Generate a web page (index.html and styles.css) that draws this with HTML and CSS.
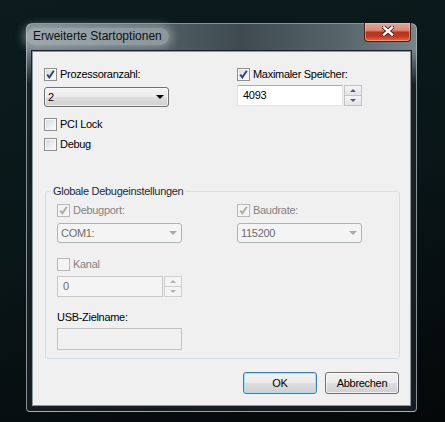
FILE: index.html
```html
<!DOCTYPE html>
<html lang="de">
<head>
    <meta charset="utf-8">
    <title>Erweiterte Startoptionen</title>
    <link rel="stylesheet" href="styles.css">
</head>
<body>
    <div class="window">
        <div class="titlebar">
            <span class="title">Erweiterte Startoptionen</span>
            <button class="close-btn" title="Schließen">
                <svg width="12" height="10" viewBox="0 0 12 10">
                    <path d="M2 1.5 L10 8.5 M10 1.5 L2 8.5" stroke="#3b1d18" stroke-width="4.2" stroke-linecap="square" fill="none"/>
                    <path d="M2 1.5 L10 8.5 M10 1.5 L2 8.5" stroke="#ffffff" stroke-width="2.4" stroke-linecap="square" fill="none"/>
                </svg>
            </button>
        </div>

        <div class="client">
            <div class="top-grid">
                <div class="field">
                    <label class="check">
                        <span class="box">
                            <svg width="11" height="11" viewBox="0 0 11 11"><path d="M2.2 5.6 L4.4 8.4 L8.8 1.8" stroke="#2d4377" stroke-width="1.9" fill="none"/></svg>
                        </span>Prozessoranzahl:
                    </label>
                    <div class="combo">
                        <span>2</span>
                        <span class="arrow"></span>
                    </div>
                </div>
                <div class="field">
                    <label class="check">
                        <span class="box">
                            <svg width="11" height="11" viewBox="0 0 11 11"><path d="M2.2 5.6 L4.4 8.4 L8.8 1.8" stroke="#2d4377" stroke-width="1.9" fill="none"/></svg>
                        </span>Maximaler Speicher:
                    </label>
                    <div class="spin">
                        <span class="spin-text">4093</span>
                        <span class="spin-btns">
                            <span class="spin-btn"><span class="tri-up"></span></span>
                            <span class="spin-btn"><span class="tri-down"></span></span>
                        </span>
                    </div>
                </div>
            </div>

            <label class="check pci-row"><span class="box"></span>PCI Lock</label>
            <label class="check debug-row"><span class="box"></span>Debug</label>

            <div class="group">
                <div class="group-title">Globale Debugeinstellungen</div>

                <div class="group-grid">
                    <div class="field">
                        <label class="check disabled">
                            <span class="box">
                                <svg width="11" height="11" viewBox="0 0 11 11"><path d="M2.2 5.6 L4.4 8.4 L8.8 1.8" stroke="#acacac" stroke-width="1.9" fill="none"/></svg>
                            </span>Debugport:
                        </label>
                        <div class="combo disabled">
                            <span>COM1:</span>
                            <span class="arrow"></span>
                        </div>
                    </div>
                    <div class="field">
                        <label class="check disabled">
                            <span class="box">
                                <svg width="11" height="11" viewBox="0 0 11 11"><path d="M2.2 5.6 L4.4 8.4 L8.8 1.8" stroke="#acacac" stroke-width="1.9" fill="none"/></svg>
                            </span>Baudrate:
                        </label>
                        <div class="combo disabled">
                            <span>115200</span>
                            <span class="arrow"></span>
                        </div>
                    </div>
                </div>

                <label class="check disabled kanal-row"><span class="box"></span>Kanal</label>
                <div class="spin disabled kanal-spin">
                    <span class="spin-text">0</span>
                    <span class="spin-btns">
                        <span class="spin-btn"><span class="tri-up"></span></span>
                        <span class="spin-btn"><span class="tri-down"></span></span>
                    </span>
                </div>

                <div class="usb-label">USB-Zielname:</div>
                <div class="textbox"></div>
            </div>

            <div class="actions">
                <button class="btn default">OK</button>
                <button class="btn">Abbrechen</button>
            </div>
        </div>
    </div>
</body>
</html>
```

FILE: styles.css
```css
body {
    margin: 0;
    width: 445px;
    height: 422px;
    position: relative;
    overflow: hidden;
    font-family: "Liberation Sans", Arial, sans-serif;
    font-size: 11px;
    letter-spacing: -0.3px;
    color: #000;
    background: linear-gradient(165deg, #0c1b1e 0%, #0a1719 45%, #040808 100%);
}

.window {
    position: absolute;
    left: 26px;
    top: 23px;
    width: 391px;
    height: 389px;
    box-sizing: border-box;
    display: flex;
    flex-direction: column;
    padding: 0 5px 5px 5px;
    border: 1px solid rgba(185, 195, 200, 0.7);
    border-radius: 6px 6px 4px 4px;
    background:
        linear-gradient(to bottom, rgba(24, 32, 36, 0) 0, rgba(24, 32, 36, 0) 26px, #192125 60px, #151b1f 100%),
        linear-gradient(90deg, #75828a 0%, #55636a 30%, #3e4a50 55%, #56646a 80%, #78868c 100%);
}

.titlebar {
    height: 27px;
    display: flex;
    justify-content: space-between;
    align-items: flex-start;
}

.title {
    margin: 4px 0 0 -6px;
    padding: 1px 7px;
    font-size: 12px;
    letter-spacing: 0;
    line-height: 15px;
    border-radius: 10px;
    background: rgba(190, 198, 202, 0.55);
    box-shadow: 0 0 8px 3px rgba(190, 198, 202, 0.5);
    color: #111;
}

.close-btn {
    margin-top: -1px;
    width: 47px;
    height: 19px;
    padding: 0;
    display: flex;
    align-items: flex-start;
    justify-content: center;
    padding-top: 3px;
    border: 1px solid #4b2018;
    border-top: none;
    border-radius: 0 0 4px 4px;
    background: linear-gradient(#e4a898 0%, #d98a78 40%, #b8331a 52%, #c23a20 75%, #df6f4e 100%);
    box-shadow: inset 0 0 0 1px rgba(255, 200, 185, 0.45);
}

.client {
    flex: 1;
    box-sizing: border-box;
    padding: 14px 11px 11px 11px;
    background: #f0f0f0;
    border: 1px solid #8d969b;
    box-shadow: 0 0 0 1px #1b2226;
}

.top-grid {
    display: grid;
    grid-template-columns: 193px 1fr;
}

.group-grid {
    display: grid;
    grid-template-columns: 180px 1fr;
    margin-top: 3px;
}

.check {
    display: flex;
    align-items: center;
    height: 17px;
    line-height: 17px;
}

.check.disabled {
    color: #838383;
}

.box {
    width: 13px;
    height: 13px;
    box-sizing: border-box;
    margin-right: 3px;
    display: flex;
    align-items: center;
    justify-content: center;
    border: 1px solid #8e8f8f;
    background: linear-gradient(135deg, #d3d6db 0%, #eef0f2 60%, #fbfbfb 100%);
    box-shadow: inset 0 0 0 1px #f6f6f6;
}

.check.disabled .box {
    border-color: #b8b8b8;
    background: #f4f4f4;
    box-shadow: none;
}

.pci-row {
    margin-top: 9px;
}

.debug-row {
    margin-top: 3px;
}

.combo {
    margin-top: 4px;
    width: 125px;
    height: 20px;
    box-sizing: border-box;
    display: flex;
    align-items: center;
    justify-content: space-between;
    padding: 0 4px 0 3px;
    border: 1px solid #707070;
    border-radius: 3px;
    background: linear-gradient(#f3f3f3 0%, #ebebeb 48%, #dedede 52%, #d0d0d0 100%);
    box-shadow: inset 0 0 0 1px rgba(255, 255, 255, 0.6);
}

.combo .arrow {
    width: 0;
    height: 0;
    border-left: 4px solid transparent;
    border-right: 4px solid transparent;
    border-top: 4px solid #000;
}

.combo.disabled {
    color: #6d6d6d;
    border-color: #adb2b5;
    background: #f4f4f4;
    box-shadow: none;
}

.combo.disabled .arrow {
    border-top-color: #a9a9a9;
}

.spin {
    margin-top: 2px;
    width: 125px;
    height: 21px;
    display: flex;
}

.spin-text {
    flex: 1;
    box-sizing: border-box;
    padding: 0 5px;
    line-height: 19px;
    border: 1px solid #e2e3ea;
    border-top-color: #abadb3;
    background: #fff;
}

.spin-btns {
    width: 18px;
    display: flex;
    flex-direction: column;
    margin-left: 1px;
}

.spin-btn {
    flex: 1;
    display: flex;
    align-items: center;
    justify-content: center;
    border: 1px solid #c3c3c3;
    background: linear-gradient(#f5f5f5, #e4e4e4);
}

.spin-btn + .spin-btn {
    border-top: none;
}

.tri-up {
    width: 0;
    height: 0;
    border-left: 3px solid transparent;
    border-right: 3px solid transparent;
    border-bottom: 3px solid #4c5e88;
}

.tri-down {
    width: 0;
    height: 0;
    border-left: 3px solid transparent;
    border-right: 3px solid transparent;
    border-top: 3px solid #4c5e88;
}

.spin.disabled .spin-text {
    color: #6d6d6d;
    background: #f4f4f4;
    border-color: #c8c8c8;
}

.spin.disabled .spin-btn {
    background: #f4f4f4;
    border-color: #cfcfcf;
}

.spin.disabled .tri-up {
    border-bottom-color: #b0b0b0;
}

.spin.disabled .tri-down {
    border-top-color: #b0b0b0;
}

.group {
    margin: 38px 0 0 1px;
    width: 355px;
    box-sizing: border-box;
    padding: 0 11px 8px 11px;
    border: 1px solid #d5dfe5;
    border-radius: 3px;
}

.group-title {
    display: table;
    margin: -8px 0 0 -6px;
    padding: 0 2px;
    line-height: 15px;
    background: #f0f0f0;
    color: #1a2a3c;
}

.kanal-row {
    margin-top: 13px;
}

.kanal-spin {
    margin-top: 3px;
}

.usb-label {
    margin-top: 12px;
    line-height: 17px;
}

.textbox {
    margin-top: 2px;
    width: 125px;
    height: 22px;
    box-sizing: border-box;
    border: 1px solid #c2c2c2;
    background: #f0f0f0;
}

.actions {
    display: flex;
    justify-content: flex-end;
    gap: 8px;
    margin-top: 13px;
}

.btn {
    width: 74px;
    height: 22px;
    padding: 0;
    font: inherit;
    letter-spacing: inherit;
    color: #000;
    border: 1px solid #707070;
    border-radius: 3px;
    background: linear-gradient(#f2f2f2 0%, #ebebeb 48%, #dddddd 52%, #cfcfcf 100%);
    box-shadow: inset 0 0 0 1px rgba(255, 255, 255, 0.7);
}

.btn.default {
    border-color: #3c7fb1;
    box-shadow: inset 0 0 0 1px #a6def7;
}
```
